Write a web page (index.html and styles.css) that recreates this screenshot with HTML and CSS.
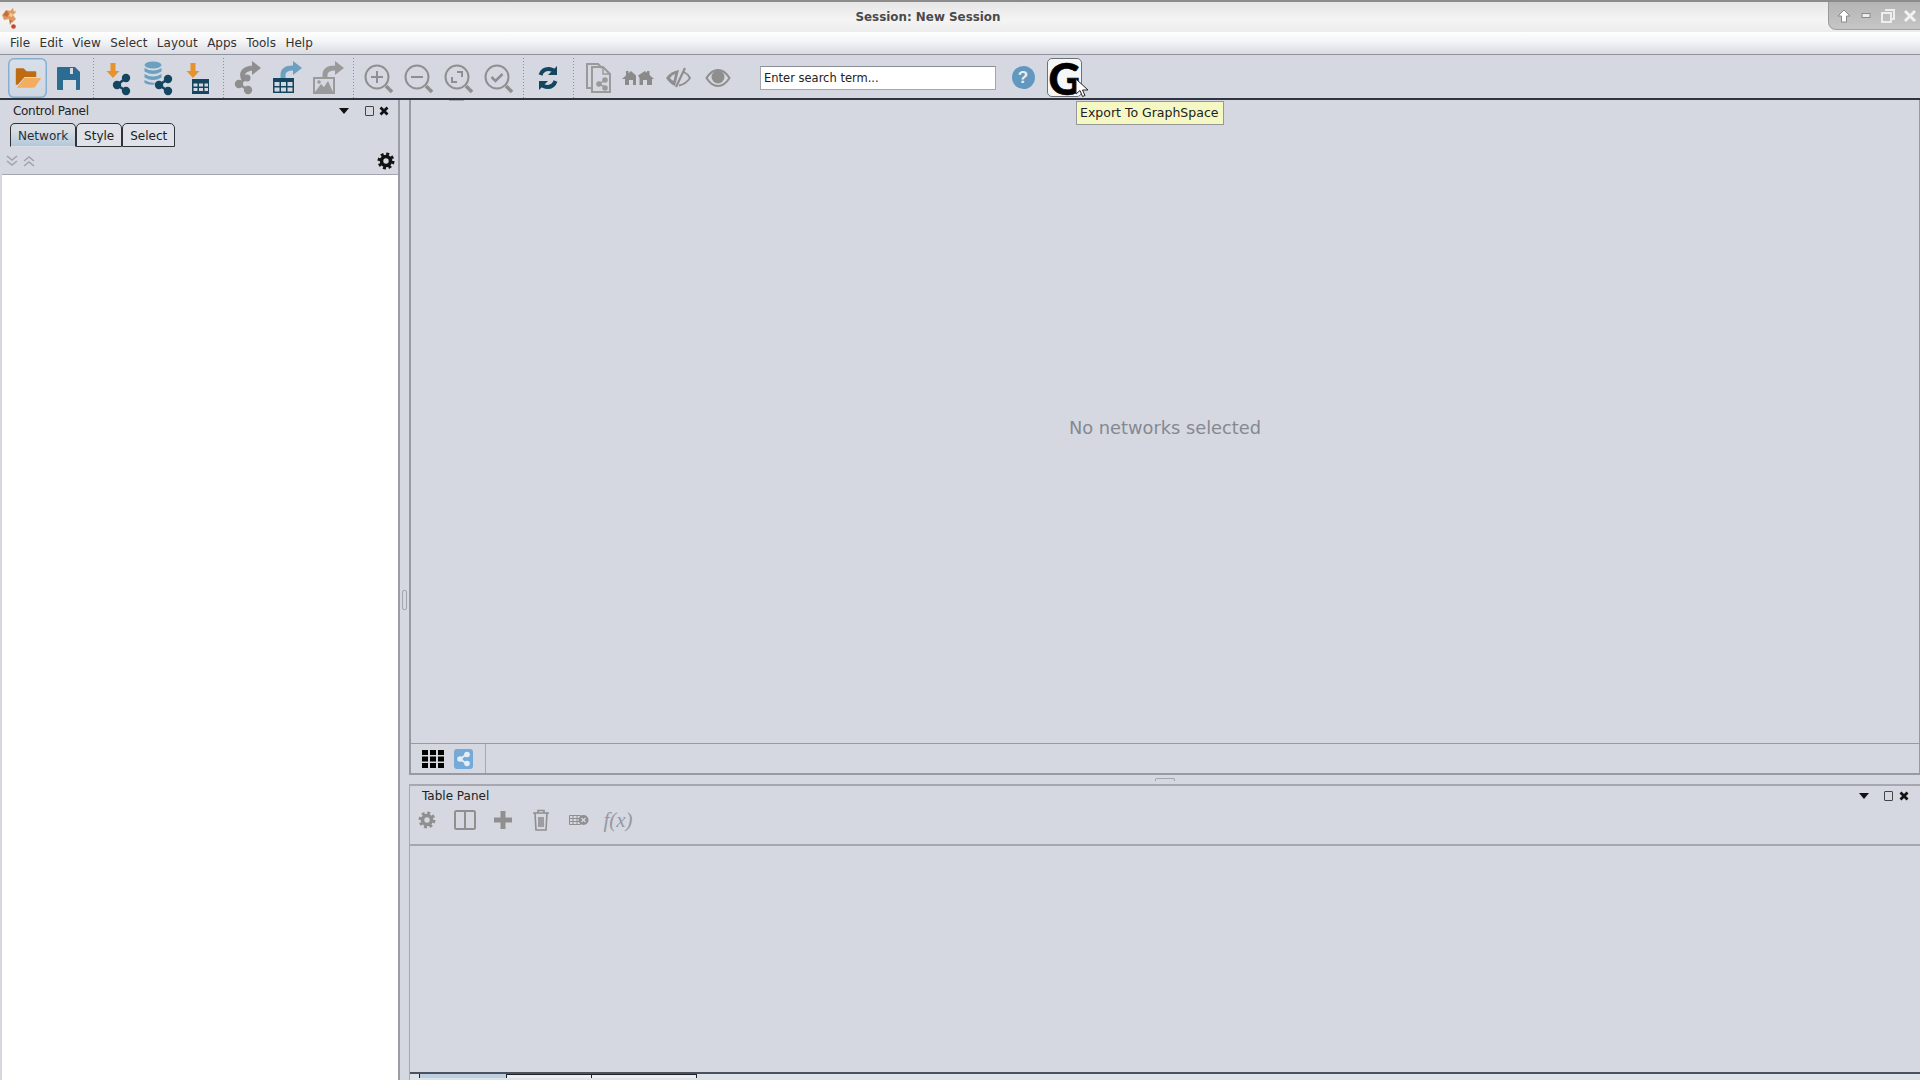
FILE: index.html
```html
<!DOCTYPE html>
<html lang="en">
<head>
    <meta charset="UTF-8">
    <title>Session: New Session</title>
    <link rel="stylesheet" href="styles.css">
</head>
<body>
    <!-- Window title bar -->
    <header class="titlebar">
        <svg class="app-icon" width="28" height="26" viewBox="0 0 28 26">
            <path d="M4 11l5-5 3 1 3-3 3 4-3 3 3 4-4 4-3-4-5 1z" fill="#dd9a62"/>
            <path d="M8 6l3 4-2 3-4-2zM11 15l3 2-2 4z" fill="#c4703a"/>
            <path d="M12 9l3 1-1 3-3-1z" fill="#f3cf86"/>
            <path d="M15 4l3 2-2 2z" fill="#efe6d8"/>
            <circle cx="15.500" cy="22.500" r="2.300" fill="#bd4a33"/>
        </svg>
        <div class="title">Session: New Session</div>
        <div class="win-buttons">
            <svg width="14" height="14" viewBox="0 0 14 14"><path d="M7 1l6 6H9.500v6h-5V7H1z" fill="#fff" stroke="#8a8a8a"/></svg>
            <svg width="10" height="8" viewBox="0 0 10 8"><rect x="1" y="1.500" width="8" height="4" fill="#eee" stroke="#8a8a8a"/></svg>
            <svg width="14" height="14" viewBox="0 0 14 14"><path d="M4 1h9v9H10M1 4h9v9H1z" fill="none" stroke="#eee" stroke-width="2"/></svg>
            <svg width="14" height="14" viewBox="0 0 14 14"><path d="M2 2l10 10M12 2L2 12" stroke="#f2f2f2" stroke-width="3"/></svg>
        </div>
    </header>

    <!-- Menu bar -->
    <nav class="menubar">
        <span>File</span><span>Edit</span><span>View</span><span>Select</span><span>Layout</span><span>Apps</span><span>Tools</span><span>Help</span>
    </nav>

    <!-- Main toolbar -->
    <div class="toolbar">
        <button class="tool tool-active">
            <svg width="40" height="40" viewBox="0 0 40 40">
                <path d="M8 11q0-1 1-1h7l3 3h9q1 0 1 1v5H17l-7 8H8z" fill="#bd6c14"/>
                <path d="M9 30l8-10h17l-6 9q-1 1-2 1z" fill="#f2ad5e"/>
            </svg>
        </button>
        <button class="tool">
            <svg width="40" height="40" viewBox="0 0 40 40">
                <path d="M9 10q0-1 1-1h17l5 5v17q0 1-1 1H10q-1 0-1-1z" fill="#2c6c93"/>
                <rect x="22" y="10" width="3" height="6" fill="#d5d8e1"/>
                <rect x="15" y="22" width="13" height="10" fill="#d7dde3"/>
            </svg>
        </button>
        <i class="tool-sep"></i>
        <button class="tool">
            <svg width="40" height="40" viewBox="0 0 40 40">
                <path d="M12.500 5h5v8h4l-6.500 7-6.500-7h4z" fill="#e8922c"/>
                <path d="M28 20L19 27l9 6" fill="none" stroke="#15465f" stroke-width="2.500"/>
                <circle cx="19" cy="27" r="4.200" fill="#15465f"/><circle cx="28" cy="20" r="4.200" fill="#15465f"/><circle cx="28" cy="33" r="4.200" fill="#15465f"/>
            </svg>
        </button>
        <button class="tool">
            <svg width="40" height="40" viewBox="0 0 40 40">
                <ellipse cx="15" cy="7" rx="8.500" ry="3.500" fill="#6ba0c0"/>
                <path d="M6.500 10q8.500 5 17 0v3.500q-8.500 5-17 0zM6.500 16q8.500 5 17 0v3.500q-8.500 5-17 0zM6.500 22q6 3.500 10 2.500v2q-6 1-10-1.500z" fill="#6ba0c0"/>
                <path d="M30 21L21 27l9 6" fill="none" stroke="#15465f" stroke-width="2.500"/>
                <circle cx="21" cy="27" r="4.200" fill="#15465f"/><circle cx="30" cy="21" r="4.200" fill="#15465f"/><circle cx="30" cy="33" r="4.200" fill="#15465f"/>
            </svg>
        </button>
        <button class="tool">
            <svg width="40" height="40" viewBox="0 0 40 40">
                <path d="M12.500 5h5v8h4l-6.500 7-6.500-7h4z" fill="#e8922c"/>
                <path d="M14 21h17v15H14z" fill="#15465f"/>
                <path d="M15.500 25.500h4v3h-4zM21 25.500h4v3h-4zM26.500 25.500h3.500v3h-3.500zM15.500 30h4v3h-4zM21 30h4v3h-4zM26.500 30h3.500v3h-3.500z" fill="#d5d8e1"/>
            </svg>
        </button>
        <i class="tool-sep"></i>
        <button class="tool">
            <svg width="40" height="40" viewBox="0 0 40 40">
                <path d="M16 22q-5-10 8-12" fill="none" stroke="#8e8e8e" stroke-width="5"/>
                <path d="M24 3l9 7-9 7z" fill="#8e8e8e"/>
                <path d="M20 19L11 26l9 6" fill="none" stroke="#8e8e8e" stroke-width="2.500"/>
                <circle cx="11" cy="26" r="4.200" fill="#8e8e8e"/><circle cx="19" cy="20" r="3.500" fill="#8e8e8e"/><circle cx="20" cy="32" r="4.200" fill="#8e8e8e"/>
            </svg>
        </button>
        <button class="tool">
            <svg width="40" height="40" viewBox="0 0 40 40">
                <path d="M5 20h21v15H5z" fill="#15465f"/>
                <path d="M6.500 24h5v4h-5zM13 24h5v4h-5zM19.500 24h5v4h-5zM6.500 29.500h5v4h-5zM13 29.500h5v4h-5zM19.500 29.500h5v4h-5z" fill="#d5d8e1"/>
                <path d="M15 20v-3q0-7 10-7" fill="none" stroke="#6ba0c0" stroke-width="5"/>
                <path d="M25 3l9 7-9 7z" fill="#6ba0c0"/>
            </svg>
        </button>
        <button class="tool">
            <svg width="40" height="40" viewBox="0 0 40 40">
                <path d="M6 20h20v15H6z" fill="none" stroke="#9a9a9a" stroke-width="2"/>
                <path d="M7 34l6-8 3 3 4-6 5 11z" fill="#9a9a9a"/><circle cx="11" cy="24" r="1.800" fill="#9a9a9a"/>
                <path d="M17 21v-4q0-7 10-7" fill="none" stroke="#9a9a9a" stroke-width="5"/>
                <path d="M27 3l9 7-9 7z" fill="#9a9a9a"/>
            </svg>
        </button>
        <i class="tool-sep"></i>
        <button class="tool">
            <svg width="40" height="40" viewBox="0 0 40 40" fill="none" stroke="#8f8f8f" stroke-width="2">
                <circle cx="19" cy="19" r="11.500"/><path d="M28 28l6 6" stroke-width="3.500"/><path d="M13 19h12M19 13v12"/>
            </svg>
        </button>
        <button class="tool">
            <svg width="40" height="40" viewBox="0 0 40 40" fill="none" stroke="#8f8f8f" stroke-width="2">
                <circle cx="19" cy="19" r="11.500"/><path d="M28 28l6 6" stroke-width="3.500"/><path d="M13 19h12"/>
            </svg>
        </button>
        <button class="tool">
            <svg width="40" height="40" viewBox="0 0 40 40" fill="none" stroke="#8f8f8f" stroke-width="2">
                <circle cx="19" cy="19" r="11.500"/><path d="M28 28l6 6" stroke-width="3.500"/><path d="M14 19v5h5M19 14h5v5"/>
            </svg>
        </button>
        <button class="tool">
            <svg width="40" height="40" viewBox="0 0 40 40" fill="none" stroke="#8f8f8f" stroke-width="2">
                <circle cx="19" cy="19" r="11.500"/><path d="M28 28l6 6" stroke-width="3.500"/><path d="M13.500 19l4 4 7-7" stroke-width="2.500"/>
            </svg>
        </button>
        <i class="tool-sep"></i>
        <button class="tool">
            <svg width="40" height="40" viewBox="0 0 40 40" fill="none" stroke="#15465f" stroke-width="4">
                <path d="M12.500 17q2-6 8-6 4 0 6.500 3"/><path d="M29 8v9h-9z" fill="#15465f" stroke="none"/>
                <path d="M27.500 23q-2 6-8 6-4 0-6.500-3"/><path d="M11 32v-9h9z" fill="#15465f" stroke="none"/>
            </svg>
        </button>
        <i class="tool-sep"></i>
        <button class="tool">
            <svg width="40" height="40" viewBox="0 0 40 40" fill="none" stroke="#9a9a9a" stroke-width="2">
                <path d="M14 30H9V6h11l4 4"/><path d="M14 9h11l7 7v18H14z"/><path d="M25 9v7h7" stroke-width="1.500"/>
                <path d="M27 22l-6 4 6 3" stroke-width="1.500"/><circle cx="21" cy="26" r="1.800" fill="#9a9a9a"/><circle cx="27" cy="22" r="1.800" fill="#9a9a9a"/><circle cx="27" cy="30" r="1.800" fill="#9a9a9a"/>
            </svg>
        </button>
        <button class="tool">
            <svg width="40" height="40" viewBox="0 0 40 40" fill="#8a8a8a">
                <path d="M4 21l9-8 5 4.500V27h-3v-5h-4v5H7v-6z"/>
                <path d="M20 17.500l7-4.500 9 8h-2v6h-5v-5h-4v5h-3.500v-7z"/>
                <path d="M8 13h2.500v3L8 18zM29 13h2.500v5L29 16z"/>
            </svg>
        </button>
        <button class="tool">
            <svg width="40" height="40" viewBox="0 0 40 40" fill="none" stroke="#8e8e8e">
                <path d="M8 20q5-7 13-8l-4 16q-5-2-9-8z" fill="#8e8e8e" stroke="none"/>
                <path d="M12 20q2-3 5-4l-1.500 7q-2-1-3.500-3z" fill="#d5d8e1" stroke="none"/>
                <path d="M25 13.500q4.500 2 7 6.500-4 6-11 7.500" stroke-width="1.800"/>
                <path d="M27 10l-9 19" stroke-width="2.200"/>
            </svg>
        </button>
        <button class="tool">
            <svg width="40" height="40" viewBox="0 0 40 40" fill="none" stroke="#8e8e8e">
                <path d="M8.500 20q5-8 11.500-8t11.500 8q-5 8-11.500 8t-11.500-8z" stroke-width="2"/>
                <circle cx="20" cy="19" r="6.500" fill="#8e8e8e" stroke="none"/>
            </svg>
        </button>
        <input class="search" type="text" value="Enter search term...">
        <button class="tool">
            <span class="help-icon">?</span>
        </button>
        <button class="graphspace">G</button>
    </div>

    <div class="workspace">
        <!-- Control panel -->
        <aside class="control-panel">
            <div class="panel-head">
                <span class="panel-name name-tight">Control Panel</span>
                <i class="panel-menu"></i>
                <i class="panel-float"></i>
                <svg class="panel-close" width="10" height="10" viewBox="0 0 10 10"><path d="M1.500 1.500l7 7M8.500 1.500l-7 7" stroke="#111" stroke-width="2.800"/></svg>
            </div>
            <div class="tabs">
                <span class="tab tab-on">Network</span>
                <span class="tab">Style</span>
                <span class="tab">Select</span>
            </div>
            <div class="list-tools">
                <svg width="30" height="14" viewBox="0 0 30 14" fill="none" stroke="#a0a3aa" stroke-width="1.500">
                    <path d="M1 2l5 4 5-4M1 7l5 4 5-4"/><path d="M18 7l5-4 5 4M18 12l5-4 5 4"/>
                </svg>
                <svg class="gear" width="18" height="18" viewBox="0 0 18 18" fill="none" stroke="#111">
                    <circle cx="9" cy="9" r="4.500" stroke-width="3.600"/>
                    <circle cx="9" cy="9" r="7" stroke-width="3" stroke-dasharray="2.900 2.600"/>
                </svg>
            </div>
            <div class="network-list"></div>
        </aside>

        <div class="v-split"><i class="v-grip"></i></div>

        <div class="right-side">
            <!-- Network view -->
            <section class="network-view">
                <i class="top-notch"></i>
                <div class="no-networks">No networks selected</div>
                <div class="view-bar">
                    <svg width="22" height="18" viewBox="0 0 22 18" fill="#000">
                        <path d="M0 0h6v5H0zM8 0h6v5H8zM16 0h6v5h-6zM0 6.500h6v5H0zM8 6.500h6v5H8zM16 6.500h6v5h-6zM0 13h6v5H0zM8 13h6v5H8zM16 13h6v5h-6z"/>
                    </svg>
                    <svg width="20" height="20" viewBox="0 0 20 20">
                        <rect width="19" height="20" rx="3" fill="#75a9d8"/>
                        <path d="M13 5L6 10l7 5" fill="none" stroke="#e4eef7" stroke-width="1.800"/>
                        <circle cx="6" cy="10" r="2.800" fill="#e4eef7"/><circle cx="13" cy="5.500" r="2.800" fill="#e4eef7"/><circle cx="13" cy="14.500" r="2.800" fill="#e4eef7"/>
                    </svg>
                </div>
            </section>

            <div class="h-split"><i class="h-grip"></i></div>

            <!-- Table panel -->
            <section class="table-panel">
                <div class="panel-head table-head">
                    <span class="panel-name">Table Panel</span>
                    <i class="panel-menu"></i>
                    <i class="panel-float"></i>
                    <svg class="panel-close" width="10" height="10" viewBox="0 0 10 10"><path d="M1.500 1.500l7 7M8.500 1.500l-7 7" stroke="#111" stroke-width="2.800"/></svg>
                </div>
                <div class="table-tools">
                    <span class="ticon">
                        <svg width="18" height="18" viewBox="0 0 18 18" fill="none" stroke="#8f8f8f">
                            <circle cx="9" cy="9" r="4.500" stroke-width="3.600"/>
                            <circle cx="9" cy="9" r="7" stroke-width="3" stroke-dasharray="2.900 2.600"/>
                        </svg>
                    </span>
                    <span class="ticon">
                        <svg width="22" height="20" viewBox="0 0 22 20" fill="none" stroke="#8f8f8f" stroke-width="2">
                            <rect x="1" y="1" width="20" height="18" rx="1.500"/><path d="M11 1v18"/>
                        </svg>
                    </span>
                    <span class="ticon">
                        <svg width="18" height="18" viewBox="0 0 18 18" fill="#8f8f8f"><path d="M6.500 0h5v6.500H18v5h-6.500V18h-5v-6.500H0v-5h6.500z"/></svg>
                    </span>
                    <span class="ticon">
                        <svg width="18" height="22" viewBox="0 0 18 22" fill="none" stroke="#8f8f8f" stroke-width="1.600">
                            <path d="M1 4h16M6 4V1.500h6V4M3 4l1 17h10l1-17M7 8v10M9 8v10M11 8v10"/>
                        </svg>
                    </span>
                    <span class="ticon">
                        <svg width="20" height="12" viewBox="0 0 20 12">
                            <path d="M.500 1.500h11v9H.500zM4 1.500v9M8 1.500v9M.500 4.500h11M.500 7.500h11" fill="none" stroke="#8f8f8f"/>
                            <circle cx="14.500" cy="6" r="5" fill="#8f8f8f"/>
                            <path d="M12.500 4l4 4M16.500 4l-4 4" stroke="#d5d8e1" stroke-width="1.300"/>
                        </svg>
                    </span>
                    <span class="ticon fx">f(x)</span>
                </div>
                <div class="table-body"></div>
                <div class="bottom-tabs">
                    <i class="btab btab-stub"></i>
                    <i class="btab btab-on"></i>
                    <i class="btab btab-line btab-a"></i>
                    <i class="btab btab-line btab-b"></i>
                </div>
            </section>
        </div>
    </div>

    <!-- Tooltip and pointer over the toolbar -->
    <div class="tooltip">Export To GraphSpace</div>
    <svg class="cursor" width="14" height="20" viewBox="0 0 14 20">
        <path d="M1 1v15l4-3.500 2.500 6 2.500-1-2.500-5.500H13z" fill="#fff" stroke="#222"/>
    </svg>
</body>
</html>
```

FILE: styles.css
```css
/* Page reset */
html, body {
    margin: 0;
    padding: 0;
    height: 100%;
}

body {
    width: 1920px;
    height: 1080px;
    overflow: hidden;
    display: flex;
    flex-direction: column;
    background-color: #d5d8e1;
    color: #222;
    font-family: "DejaVu Sans", sans-serif;
    font-size: 12px;
}

/* Title bar */
.titlebar {
    height: 32px;
    flex: none;
    box-sizing: border-box;
    display: flex;
    align-items: center;
    border-top: 2px solid #8c8c8c;
    background: linear-gradient(#e6e6e6, #f4f4f4 60%, #ececec);
}

.app-icon {
    flex: none;
    margin-left: -2px;
    margin-right: 2px;
}

.title {
    flex: 1;
    text-align: center;
    font-weight: bold;
    color: #4a4a4a;
    font-size: 11.900px;
}

.win-buttons {
    width: 92px;
    height: 28px;
    margin-top: -2px;
    box-sizing: border-box;
    padding: 0 1px 0 4px;
    display: grid;
    grid-template-columns: repeat(4, 22px);
    justify-items: center;
    align-items: center;
    background: linear-gradient(#b4b4b4, #c6c6c6);
    border-bottom-left-radius: 8px;
    border-left: 1px solid #9a9a9a;
    border-bottom: 1px solid #a0a0a0;
}

/* Menu bar */
.menubar {
    height: 23px;
    flex: none;
    box-sizing: border-box;
    padding: 0 0 1px 10px;
    display: flex;
    gap: 9.500px;
    align-items: center;
    background: linear-gradient(#fff, #f4f5f7 40%, #d9dbe2);
    border-bottom: 1px solid #8f939b;
    font-size: 12px;
    color: #333;
}

/* Main toolbar */
.toolbar {
    height: 45px;
    flex: none;
    box-sizing: border-box;
    padding: 3px 0 0 8px;
    display: flex;
    align-items: flex-start;
    border-bottom: 2px solid #2e3440;
}

.tool {
    width: 40px;
    height: 40px;
    flex: none;
    margin: 0;
    padding: 0;
    border: none;
    background: none;
    display: flex;
    align-items: center;
    justify-content: center;
}

.tool-active {
    border-radius: 6px;
    box-shadow: inset 0 0 0 1.500px #86aed0;
    background: linear-gradient(#d9dfe8, #cfd7e3);
    width: 39px;
    margin-right: 1px;
}

.tool-sep {
    width: 10px;
    height: 40px;
    flex: none;
    margin: 0;
    background: linear-gradient(#8c8f96 50%, transparent 50%) 5px 0 / 1px 3px repeat-y;
}

.search {
    width: 236px;
    height: 24px;
    margin: 8px 7px 0 22px;
    padding: 0 3px;
    box-sizing: border-box;
    border: 1px solid #a4a7ad;
    border-top-color: #8a8d93;
    background: #fff;
    color: #222;
    font-family: "DejaVu Sans", sans-serif;
    font-size: 11.500px;
    outline: none;
}

.help-icon {
    width: 23px;
    height: 23px;
    margin-bottom: 2px;
    border-radius: 50%;
    background: #6298bf;
    color: #e8eef3;
    font-size: 17px;
    font-weight: bold;
    line-height: 23px;
    text-align: center;
}

.graphspace {
    width: 35px;
    height: 39px;
    margin: 0 0 0 4px;
    padding: 0;
    box-sizing: border-box;
    border: 1px solid #6d7076;
    border-radius: 5px;
    background: #f6f7f9;
    color: #000;
    font-family: Lato, sans-serif;
    font-weight: 900;
    font-size: 44px;
    line-height: 38px;
    text-align: center;
    -webkit-text-stroke: 0.6px #000;
}

/* Panels below the toolbar */
.workspace {
    flex: 1;
    min-height: 0;
    display: flex;
}

.control-panel {
    width: 400px;
    flex: none;
    display: flex;
    flex-direction: column;
    box-sizing: border-box;
    border-right: 2px solid #9a9da5;
}

.panel-head {
    height: 22px;
    flex: none;
    padding: 0 9.500px 0 13px;
    display: flex;
    align-items: center;
    color: #222;
}

.panel-name {
    flex: 1;
}

.name-tight {
    letter-spacing: -0.3px;
}

.panel-menu {
    width: 0;
    height: 0;
    border-left: 5px solid transparent;
    border-right: 5px solid transparent;
    border-top: 6px solid #111;
    margin-right: 15.500px;
}

.panel-float {
    width: 7px;
    height: 8px;
    border: 1px solid #444;
    border-radius: 1px;
    margin-right: 5px;
}

.tabs {
    margin-top: 1px;
    padding-left: 10px;
    height: 24px;
    flex: none;
    display: flex;
}

.tab {
    box-sizing: border-box;
    height: 24px;
    padding: 0 7px;
    line-height: 24px;
    border: 1px solid #2f3338;
    border-radius: 5px 5px 0 0;
    background: #dfe2e9;
    font-size: 12px;
    color: #222;
}

.tab-on {
    border-bottom-color: transparent;
    background: linear-gradient(#d9dde4 30%, #b3c8da);
    color: #1e3040;
}

.list-tools {
    height: 27px;
    flex: none;
    padding: 0 2px 0 6px;
    display: flex;
    align-items: center;
    justify-content: space-between;
}

.gear {
    margin-right: 1px;
}

.network-list {
    flex: 1;
    margin-left: 2px;
    background: #fff;
    border-top: 1px solid #a2a5ab;
}

.v-split {
    width: 9px;
    flex: none;
    display: flex;
    align-items: center;
    justify-content: center;
    padding-top: 20px;
    box-sizing: border-box;
}

.v-grip {
    width: 3px;
    height: 18px;
    border: 1px solid #a2a5ab;
    border-radius: 2px;
}

.right-side {
    flex: 1;
    min-width: 0;
    display: flex;
    flex-direction: column;
}

.network-view {
    position: relative;
    height: 675px;
    flex: none;
    box-sizing: border-box;
    display: flex;
    flex-direction: column;
    border-left: 2px solid #979aa2;
    border-right: 1px solid #979aa2;
    border-bottom: 2px solid #979aa2;
}

.top-notch {
    position: absolute;
    left: 38px;
    top: 0;
    width: 15px;
    height: 1px;
    background: #a5a8ae;
}

.no-networks {
    flex: 1;
    padding-top: 12px;
    display: flex;
    align-items: center;
    justify-content: center;
    font-size: 17.800px;
    color: #85888f;
}

.view-bar {
    height: 30px;
    flex: none;
    box-sizing: border-box;
    padding-left: 11px;
    display: flex;
    gap: 10px;
    align-items: center;
    border-top: 1px solid #979aa2;
}

.view-bar::after {
    content: "";
    width: 1px;
    height: 100%;
    margin-left: 1px;
    background: #a5a8ae;
}

.h-split {
    height: 9px;
    flex: none;
    display: flex;
    justify-content: center;
    align-items: center;
}

.h-grip {
    width: 18px;
    height: 2px;
    border-top: 1px solid #a2a5ab;
    border-left: 1px solid #a2a5ab;
    border-right: 1px solid #a2a5ab;
    border-radius: 2px 2px 0 0;
}

.table-panel {
    flex: 1;
    min-height: 0;
    display: flex;
    flex-direction: column;
    border-top: 2px solid #a5a8ae;
    border-left: 1px solid #a5a8ae;
}

.table-head {
    padding: 0 11px 0 12px;
    height: 19px;
}

.table-head .panel-menu {
    margin-right: 15px;
}

.table-head .panel-float {
    margin-right: 6px;
}

.table-tools {
    height: 41px;
    flex: none;
    box-sizing: border-box;
    padding: 0 0 9px 8px;
    display: flex;
    align-items: center;
    border-bottom: 2px solid #a5a8ae;
}

.ticon {
    width: 38px;
    display: flex;
    justify-content: center;
    align-items: center;
}

.ticon:first-child {
    width: 18px;
    margin-right: 10px;
}

.fx {
    font-family: "Liberation Serif", serif;
    font-style: italic;
    font-size: 21px;
    color: #96999f;
    margin-left: 1px;
}

.table-body {
    flex: 1;
}

.bottom-tabs {
    height: 6px;
    flex: none;
    display: flex;
    border-top: 2px solid #4a5260;
    background: #dfe2e8;
}

.btab {
    box-sizing: border-box;
    height: 4px;
}

.btab-stub {
    width: 10px;
    border-right: 1px solid #222;
}

.btab-on {
    width: 86px;
    background: #bccfe0;
}

.btab-line {
    width: 86px;
    border: 1px solid #222;
    border-bottom: none;
    background: #eceef1;
}

.btab-b {
    width: 105px;
    border-left: none;
}

/* Floating over the toolbar */
.tooltip {
    position: absolute;
    left: 1076px;
    top: 101px;
    width: 148px;
    height: 24px;
    box-sizing: border-box;
    border: 1px solid #96989a;
    background: #f6f8c4;
    color: #222;
    font-size: 12.500px;
    line-height: 22px;
    padding-left: 3px;
    white-space: nowrap;
}

.cursor {
    position: absolute;
    left: 1075px;
    top: 78px;
}
```
